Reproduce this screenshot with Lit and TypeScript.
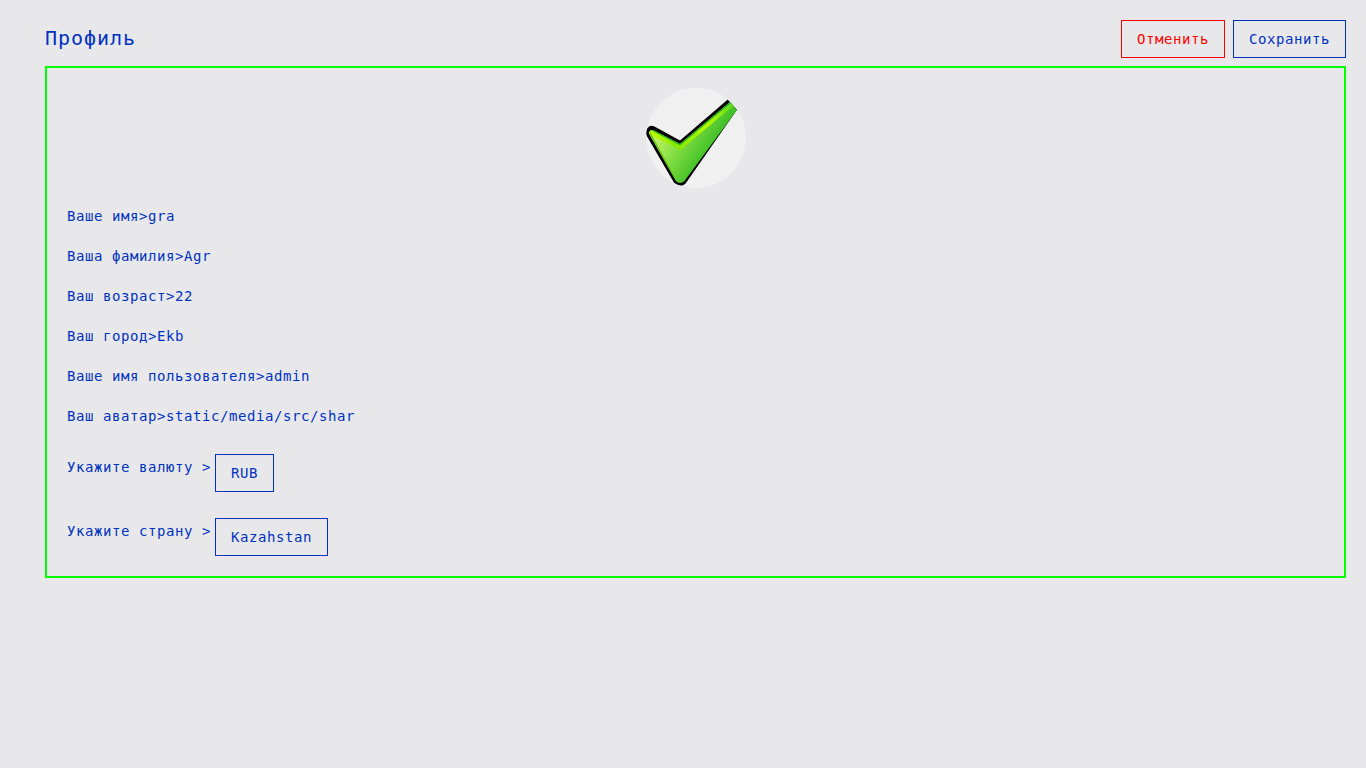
import { LitElement, html, css } from "lit";
import { customElement } from "lit/decorators.js";

const fields: [string, string][] = [
  ["Ваше имя", "gra"],
  ["Ваша фамилия", "Agr"],
  ["Ваш возраст", "22"],
  ["Ваш город", "Ekb"],
  ["Ваше имя пользователя", "admin"],
  ["Ваш аватар", "static/media/src/shar"],
];

const choices: [string, string][] = [
  ["Укажите валюту", "RUB"],
  ["Укажите страну", "Kazahstan"],
];

@customElement("profile-avatar")
class ProfileAvatar extends LitElement {
  static styles = css`
    :host { display: block; width: 100px; height: 100px; border-radius: 50%; overflow: hidden; }
    .picture { display: block; }
  `;
  render() {
    return html`<svg class="picture" width="100" height="100" viewBox="0 0 100 100">
      <defs>
        <pattern id="check" width="3" height="3" patternUnits="userSpaceOnUse">
          <rect width="3" height="3" fill="#f6f6f6" />
          <rect width="1.5" height="1.5" fill="#ebebeb" />
          <rect x="1.5" y="1.5" width="1.5" height="1.5" fill="#ebebeb" />
        </pattern>
        <linearGradient id="body" gradientUnits="userSpaceOnUse" x1="12" y1="52" x2="56" y2="80">
          <stop offset="0" stop-color="#b8f060" />
          <stop offset="0.45" stop-color="#7edb40" />
          <stop offset="1" stop-color="#38bd24" />
        </linearGradient>
        <linearGradient id="edge" gradientUnits="userSpaceOnUse" x1="3" y1="0" x2="88" y2="0">
          <stop offset="0" stop-color="#c8ff00" />
          <stop offset="0.32" stop-color="#82e800" />
          <stop offset="0.7" stop-color="#b4fa00" />
          <stop offset="1" stop-color="#58d820" />
        </linearGradient>
        <clipPath id="inside">
          <path d="M3.2 46 Q2.8 42 7 42 L34 56 L84 14 L91 22 L38.5 93 Q34 97 30 93 Z" />
        </clipPath>
      </defs>
      <rect width="100" height="100" fill="url(#check)" />
      <path d="M0.8 48 Q-1 43 1.6 40 Q4 36.8 8 38.3 L34 52.6 L81.8 11.6 L91 21.7 L39.6 95.5 Q35 100 28.5 95.5 Z" fill="#000" />
      <g clip-path="url(#inside)">
        <rect width="100" height="100" fill="url(#body)" />
        <path d="M3 43 L34 58.5 L86 15" fill="none" stroke="url(#edge)" stroke-width="6" />
        <path d="M5 41 L34 56 L85 13.5" fill="none" stroke="#18a82c" stroke-width="2" />
        <path d="M3.5 45 L30 93" fill="none" stroke="#62c812" stroke-width="2" />
      </g>
    </svg>`;
  }
}

@customElement("app-root")
class AppRoot extends LitElement {
  static styles = css`
    :host {
      display: block;
      box-sizing: border-box;
      min-height: 100vh;
      padding: 20px 20px 0 45px;
      background: #e8e8ea;
      color: #0032c1;
      font: 14px/18px "DejaVu Sans Mono", "Liberation Mono", monospace;
      letter-spacing: 0.57px;
    }
    .header { display: flex; justify-content: space-between; height: 46px; }
    .title { margin: 0; font-size: 20px; line-height: 36px; font-weight: 400; letter-spacing: 0.96px; }
    .actions { display: flex; gap: 8px; }
    .button {
      box-sizing: border-box;
      height: 38px;
      margin: 0;
      padding: 0 15px 1px;
      border: 1px solid #0032c1;
      border-radius: 0;
      background: transparent;
      color: #0032c1;
      font: inherit;
      letter-spacing: inherit;
    }
    .cancel { border-color: #f00; color: #f00; }
    .card { border: 2px solid #0f0; padding: 20px; }
    .avatar { margin: 0 auto 8px; }
    .field { line-height: 40px; white-space: pre; }
    .choices { display: flex; flex-direction: column; gap: 26px; margin-top: 18px; }
    .choice { display: flex; gap: 4px; align-items: flex-start; }
    .label { line-height: 27px; white-space: pre; }
  `;
  render() {
    return html`
      <header class="header">
        <h1 class="title">Профиль</h1>
        <div class="actions">
          <button class="button cancel">Отменить</button>
          <button class="button">Сохранить</button>
        </div>
      </header>
      <main class="card">
        <profile-avatar class="avatar"></profile-avatar>
        ${fields.map(([name, value]) => html`<div class="field">${name}&gt;${value}</div>`)}
        <div class="choices">
          ${choices.map(([name, value]) => html`<div class="choice"><span class="label">${name} &gt;</span><button class="button">${value}</button></div>`)}
        </div>
      </main>
    `;
  }
}
